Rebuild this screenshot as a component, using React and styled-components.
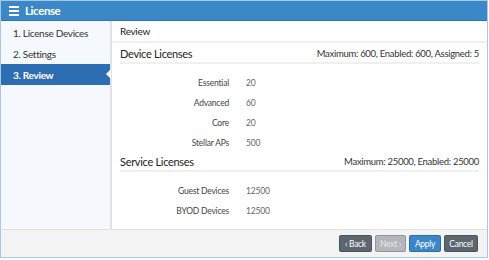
import React from "react";
import styled, { createGlobalStyle } from "styled-components";

const GlobalStyle = createGlobalStyle`
  body {
    margin: 0;
    font-family: Lato, "Open Sans", sans-serif;
    background: #fff;
  }
`;

const steps = ["1. License Devices", "2. Settings", "3. Review"];

const device = [
  ["Essential", "20"],
  ["Advanced", "60"],
  ["Core", "20"],
  ["Stellar APs", "500"],
];

const service = [
  ["Guest Devices", "12500"],
  ["BYOD Devices", "12500"],
];

const Section = ({ title, summary, rows }) => (
  <>
    <SectionHead>
      <SectionTitle>{title}</SectionTitle>
      <Summary>{summary}</Summary>
    </SectionHead>
    <Rows>
      {rows.map(([label, value]) => (
        <Row key={label}>
          <Label>{label}</Label>
          <Value>{value}</Value>
        </Row>
      ))}
    </Rows>
  </>
);

const App = () => {
  return (
    <>
      <GlobalStyle />
      <Frame>
        <Header>
          <MenuIcon>
            <span />
            <span />
            <span />
          </MenuIcon>
          License
        </Header>
        <Body>
          <Sidebar>
            {steps.map((s, i) => (
              <Step key={s} $active={i === 2}>
                {s}
              </Step>
            ))}
          </Sidebar>
          <Content>
            <PageTitle>Review</PageTitle>
            <Sections>
              <Section
                title="Device Licenses"
                summary="Maximum: 600, Enabled: 600, Assigned: 5"
                rows={device}
              />
              <Section
                title="Service Licenses"
                summary="Maximum: 25000, Enabled: 25000"
                rows={service}
              />
            </Sections>
          </Content>
        </Body>
        <Footer>
          <Button $bg="#5b6670" $w={33}>‹ Back</Button>
          <Button $bg="#b3b7bb" $color="#e6e8ea" $w={31}>Next ›</Button>
          <Button $bg="#3a86c8" $w={32}>Apply</Button>
          <Button $bg="#5b6670" $w={34}>Cancel</Button>
        </Footer>
      </Frame>
    </>
  );
};

export default App;

const Frame = styled.div`
  width: 488px;
  height: 258px;
  box-sizing: border-box;
  border: 1px solid #a6c8ec;
  display: flex;
  flex-direction: column;
`;

const Header = styled.div`
  height: 20px;
  background: #3c87c8;
  border-bottom: 1px solid #2f74b4;
  box-sizing: border-box;
  display: flex;
  align-items: center;
  gap: 6px;
  padding-left: 8px;
  color: #fff;
  font-weight: bold;
  font-size: 11.5px;
  letter-spacing: -0.4px;
`;

const MenuIcon = styled.div`
  width: 10px;
  display: flex;
  flex-direction: column;
  gap: 2px;

  > span {
    height: 2px;
    background: #fff;
  }
`;

const Body = styled.div`
  flex: 1;
  display: flex;
  min-height: 0;
`;

const Sidebar = styled.div`
  width: 109px;
  background: #f5f8fc;
  border-right: 2px solid #dfe3e8;
  padding-top: 1px;
  display: flex;
  flex-direction: column;
`;

const Step = styled.div`
  position: relative;
  height: 21px;
  display: flex;
  align-items: center;
  padding-left: 12px;
  font-size: 10px;
  letter-spacing: -0.3px;
  color: ${(p) => (p.$active ? "#fff" : "#333")};
  font-weight: ${(p) => (p.$active ? "bold" : "normal")};
  background: ${(p) => (p.$active ? "#2d6db1" : "transparent")};

  ${(p) =>
    p.$active &&
    `
    &::after {
      content: "";
      position: absolute;
      right: -1px;
      top: 5px;
      border-top: 5px solid transparent;
      border-bottom: 5px solid transparent;
      border-right: 5px solid #fff;
    }
  `}
`;

const Content = styled.div`
  flex: 1;
  background: #fff;
  display: flex;
  flex-direction: column;
`;

const PageTitle = styled.div`
  height: 22px;
  box-sizing: border-box;
  border-bottom: 2px solid #f0f0f0;
  display: flex;
  align-items: center;
  padding-left: 8px;
  font-size: 10px;
  letter-spacing: -0.3px;
  color: #222;
`;

const Sections = styled.div`
  padding: 3px 8px 0;
`;

const SectionHead = styled.div`
  height: 18px;
  box-sizing: border-box;
  border-bottom: 2px solid #f0f0f0;
  display: flex;
  align-items: center;
  justify-content: space-between;
  padding-bottom: 1px;
`;

const SectionTitle = styled.div`
  font-size: 11px;
  letter-spacing: -0.3px;
  color: #222;
`;

const Summary = styled.div`
  font-size: 9.5px;
  letter-spacing: -0.3px;
  color: #333;
`;

const Rows = styled.div`
  display: flex;
  flex-direction: column;
  padding-top: 9px;
  margin-bottom: 1px;
`;

const Row = styled.div`
  height: 20px;
  display: flex;
  align-items: center;
  font-size: 8.5px;
  letter-spacing: -0.2px;
`;

const Label = styled.div`
  width: 109px;
  text-align: right;
  color: #444;
`;

const Value = styled.div`
  margin-left: 17px;
  color: #666;
`;

const Footer = styled.div`
  height: 27px;
  background: #f3f3f3;
  border-top: 1px solid #e2e2e2;
  display: flex;
  align-items: center;
  justify-content: flex-end;
  gap: 3px;
  padding-right: 9px;
`;

const Button = styled.button`
  width: ${(p) => p.$w}px;
  height: 17px;
  padding: 0;
  border: 1px solid rgba(0, 0, 0, 0.18);
  border-radius: 2px;
  background: ${(p) => p.$bg};
  color: ${(p) => p.$color || "#fff"};
  font-family: Lato, sans-serif;
  font-size: 8.5px;
  letter-spacing: -0.3px;
  white-space: nowrap;
`;
